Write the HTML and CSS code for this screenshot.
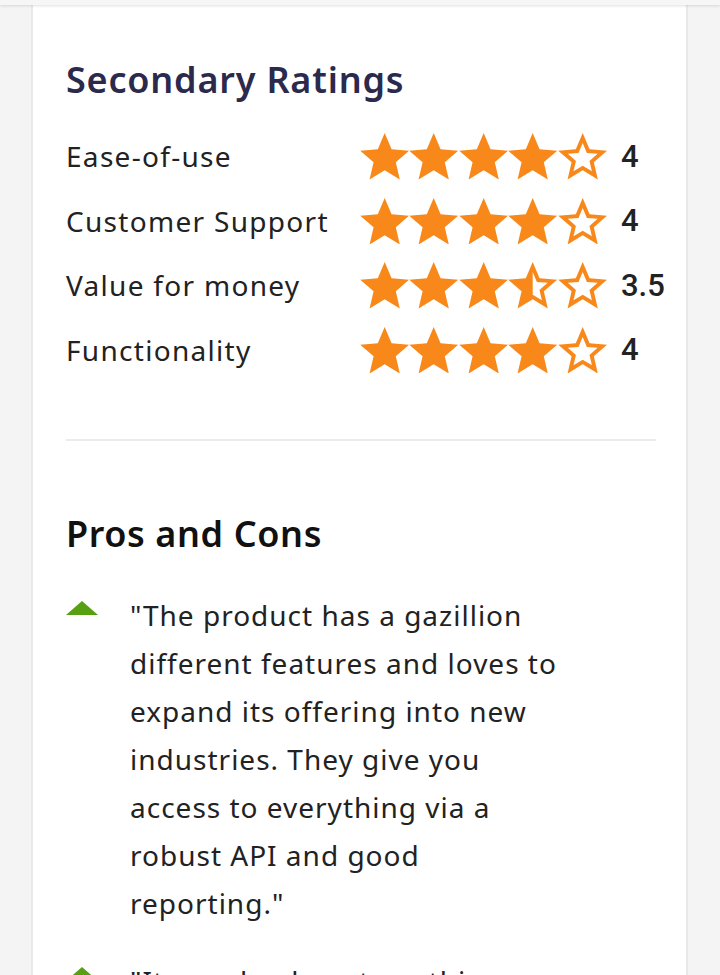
FILE: index.html
```html
<!DOCTYPE html>
<html lang="en">
<head>
<meta charset="utf-8">
<title>Secondary Ratings</title>
<link rel="stylesheet" href="styles.css">
</head>
<body>
<div class="topbar"></div>
<main class="card">
  <section class="ratings">
    <h2 class="title">Secondary Ratings</h2>
    <ul class="rating-list">
      <li class="rating-row">
        <span class="rating-label">Ease-of-use</span>
        <span class="stars">
          <svg class="star" viewBox="2 2 20 19"><path d="M12 17.27L18.18 21l-1.64-7.03L22 9.24l-7.19-.61L12 2 9.19 8.63 2 9.24l5.46 4.73L5.82 21z"/></svg>
          <svg class="star" viewBox="2 2 20 19"><path d="M12 17.27L18.18 21l-1.64-7.03L22 9.24l-7.19-.61L12 2 9.19 8.63 2 9.24l5.46 4.73L5.82 21z"/></svg>
          <svg class="star" viewBox="2 2 20 19"><path d="M12 17.27L18.18 21l-1.64-7.03L22 9.24l-7.19-.61L12 2 9.19 8.63 2 9.24l5.46 4.73L5.82 21z"/></svg>
          <svg class="star" viewBox="2 2 20 19"><path d="M12 17.27L18.18 21l-1.64-7.03L22 9.24l-7.19-.61L12 2 9.19 8.63 2 9.24l5.46 4.73L5.82 21z"/></svg>
          <svg class="star" viewBox="2 2 20 19"><path d="M22 9.24l-7.19-.62L12 2 9.19 8.63 2 9.24l5.46 4.73L5.82 21 12 17.27 18.18 21l-1.63-7.03L22 9.24zM12 15.4l-3.76 2.27 1-4.28-3.32-2.88 4.38-.38L12 6.1l1.71 4.04 4.38.38-3.32 2.88 1 4.28L12 15.4z"/></svg>
        </span>
        <span class="rating-value">4</span>
      </li>
      <li class="rating-row">
        <span class="rating-label">Customer Support</span>
        <span class="stars">
          <svg class="star" viewBox="2 2 20 19"><path d="M12 17.27L18.18 21l-1.64-7.03L22 9.24l-7.19-.61L12 2 9.19 8.63 2 9.24l5.46 4.73L5.82 21z"/></svg>
          <svg class="star" viewBox="2 2 20 19"><path d="M12 17.27L18.18 21l-1.64-7.03L22 9.24l-7.19-.61L12 2 9.19 8.63 2 9.24l5.46 4.73L5.82 21z"/></svg>
          <svg class="star" viewBox="2 2 20 19"><path d="M12 17.27L18.18 21l-1.64-7.03L22 9.24l-7.19-.61L12 2 9.19 8.63 2 9.24l5.46 4.73L5.82 21z"/></svg>
          <svg class="star" viewBox="2 2 20 19"><path d="M12 17.27L18.18 21l-1.64-7.03L22 9.24l-7.19-.61L12 2 9.19 8.63 2 9.24l5.46 4.73L5.82 21z"/></svg>
          <svg class="star" viewBox="2 2 20 19"><path d="M22 9.24l-7.19-.62L12 2 9.19 8.63 2 9.24l5.46 4.73L5.82 21 12 17.27 18.18 21l-1.63-7.03L22 9.24zM12 15.4l-3.76 2.27 1-4.28-3.32-2.88 4.38-.38L12 6.1l1.71 4.04 4.38.38-3.32 2.88 1 4.28L12 15.4z"/></svg>
        </span>
        <span class="rating-value">4</span>
      </li>
      <li class="rating-row">
        <span class="rating-label">Value for money</span>
        <span class="stars">
          <svg class="star" viewBox="2 2 20 19"><path d="M12 17.27L18.18 21l-1.64-7.03L22 9.24l-7.19-.61L12 2 9.19 8.63 2 9.24l5.46 4.73L5.82 21z"/></svg>
          <svg class="star" viewBox="2 2 20 19"><path d="M12 17.27L18.18 21l-1.64-7.03L22 9.24l-7.19-.61L12 2 9.19 8.63 2 9.24l5.46 4.73L5.82 21z"/></svg>
          <svg class="star" viewBox="2 2 20 19"><path d="M12 17.27L18.18 21l-1.64-7.03L22 9.24l-7.19-.61L12 2 9.19 8.63 2 9.24l5.46 4.73L5.82 21z"/></svg>
          <svg class="star" viewBox="2 2 20 19"><path d="M22 9.24l-7.19-.62L12 2 9.19 8.63 2 9.24l5.46 4.73L5.82 21 12 17.27 18.18 21l-1.63-7.03L22 9.24zM12 15.4V6.1l1.71 4.04 4.38.38-3.32 2.88 1 4.28L12 15.4z"/></svg>
          <svg class="star" viewBox="2 2 20 19"><path d="M22 9.24l-7.19-.62L12 2 9.19 8.63 2 9.24l5.46 4.73L5.82 21 12 17.27 18.18 21l-1.63-7.03L22 9.24zM12 15.4l-3.76 2.27 1-4.28-3.32-2.88 4.38-.38L12 6.1l1.71 4.04 4.38.38-3.32 2.88 1 4.28L12 15.4z"/></svg>
        </span>
        <span class="rating-value">3.5</span>
      </li>
      <li class="rating-row">
        <span class="rating-label">Functionality</span>
        <span class="stars">
          <svg class="star" viewBox="2 2 20 19"><path d="M12 17.27L18.18 21l-1.64-7.03L22 9.24l-7.19-.61L12 2 9.19 8.63 2 9.24l5.46 4.73L5.82 21z"/></svg>
          <svg class="star" viewBox="2 2 20 19"><path d="M12 17.27L18.18 21l-1.64-7.03L22 9.24l-7.19-.61L12 2 9.19 8.63 2 9.24l5.46 4.73L5.82 21z"/></svg>
          <svg class="star" viewBox="2 2 20 19"><path d="M12 17.27L18.18 21l-1.64-7.03L22 9.24l-7.19-.61L12 2 9.19 8.63 2 9.24l5.46 4.73L5.82 21z"/></svg>
          <svg class="star" viewBox="2 2 20 19"><path d="M12 17.27L18.18 21l-1.64-7.03L22 9.24l-7.19-.61L12 2 9.19 8.63 2 9.24l5.46 4.73L5.82 21z"/></svg>
          <svg class="star" viewBox="2 2 20 19"><path d="M22 9.24l-7.19-.62L12 2 9.19 8.63 2 9.24l5.46 4.73L5.82 21 12 17.27 18.18 21l-1.63-7.03L22 9.24zM12 15.4l-3.76 2.27 1-4.28-3.32-2.88 4.38-.38L12 6.1l1.71 4.04 4.38.38-3.32 2.88 1 4.28L12 15.4z"/></svg>
        </span>
        <span class="rating-value">4</span>
      </li>
    </ul>
  </section>
  <hr class="divider">
  <section class="pros-cons">
    <h2 class="subtitle">Pros and Cons</h2>
    <ul class="pc-list">
      <li class="pc-item">
        <span class="pro-icon"></span>
        <p class="pc-text">"The product has a gazillion different features and loves to expand its offering into new industries. They give you access to everything via a robust API and good reporting."</p>
      </li>
      <li class="pc-item">
        <span class="pro-icon"></span>
        <p class="pc-text">"It can do almost anything you want with the right setup and a bit of patience."</p>
      </li>
    </ul>
  </section>
</main>
</body>
</html>
```

FILE: styles.css
```css
* { box-sizing: border-box; }
html, body { margin: 0; padding: 0; }
body {
  background: #f4f4f4;
  font-family: "Noto Sans", "Open Sans", sans-serif;
  color: #222;
  height: 975px;
  overflow: hidden;
}
.topbar {
  height: 5px;
  background: #f6f6f6;
  box-shadow: 0 1px 3px rgba(0,0,0,0.12);
  position: relative;
  z-index: 1;
}
.card {
  margin-left: 31px;
  width: 657px;
  background: #fff;
  border-left: 2px solid #e9e9e9;
  border-right: 2px solid #e9e9e9;
  padding: 53px 30px 0 33px;
  min-height: 970px;
}
.title {
  margin: 0;
  font-size: 36px;
  line-height: 44px;
  font-weight: 600;
  color: #2c2a4c;
  letter-spacing: 0.8px;
}
.rating-list {
  list-style: none;
  margin: 22px 0 0;
  padding: 0;
}
.rating-row {
  display: flex;
  align-items: center;
  height: 64.5px;
}
.rating-label {
  flex: none;
  width: 294px;
  font-size: 28px;
  letter-spacing: 1.3px;
  color: #222;
  white-space: nowrap;
}
.stars {
  flex: none;
  display: flex;
}
.star {
  width: 49.4px;
  height: 46.5px;
  fill: #f8881a;
  display: block;
}
.rating-value {
  flex: none;
  margin-left: 14px;
  font-family: Roboto, sans-serif;
  font-weight: 500;
  font-size: 31px;
  color: #222;
}
.divider {
  border: 0;
  height: 2px;
  background: #ececec;
  margin: 57px 0 0;
}
.subtitle {
  margin: 71px 0 0;
  font-size: 36px;
  line-height: 44px;
  font-weight: 600;
  color: #111;
  letter-spacing: 0.6px;
}
.pc-list {
  list-style: none;
  margin: 35px 0 0;
  padding: 0;
}
.pc-item {
  display: flex;
  align-items: flex-start;
  margin-bottom: 30px;
}
.pro-icon {
  width: 0;
  height: 0;
  border-left: 16px solid transparent;
  border-right: 16px solid transparent;
  border-bottom: 14px solid #56a012;
  margin-top: 10px;
  flex: none;
}
.pc-text {
  margin: 0 0 0 32px;
  width: 445px;
  font-size: 28px;
  line-height: 48px;
  letter-spacing: 1px;
  color: #222;
}
```
